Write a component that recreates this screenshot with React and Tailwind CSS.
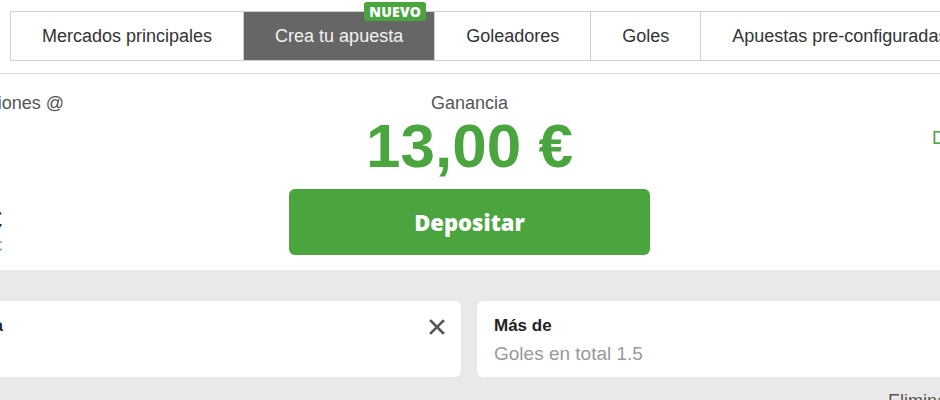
import React from 'react';

const tabs = [
  { label: 'Mercados principales' },
  { label: 'Crea tu apuesta', active: true, badge: 'NUEVO' },
  { label: 'Goleadores' },
  { label: 'Goles' },
  { label: 'Apuestas pre-configuradas' },
];

export default function App() {
  return (
    <div
      className="w-[940px] h-[400px] overflow-hidden bg-white text-[#333] font-['Liberation_Sans',Arial,sans-serif]"
    >
      {/* Tabs */}
      <div className="pt-[11px] pb-[12px] border-b border-[#dddddd]">
        <div className="ml-[10px] flex h-[50px] w-max border-t border-b border-l border-[#cfcfcf]">
          {tabs.map((t) => (
            <div
              key={t.label}
              className={`relative flex items-center px-[31px] text-[18px] border-r border-[#cfcfcf] whitespace-nowrap ${
                t.active ? 'bg-[#666666] text-[#f2f2f2]' : 'bg-white text-[#333]'
              }`}
            >
              {t.label}
              {t.badge && (
                <span className="absolute -top-[10px] right-[8px] h-[19px] px-[5px] flex items-center rounded-[3px] bg-[#4aa53e] text-white text-[14px] font-extrabold font-['Open_Sans',sans-serif] tracking-[0.2px]">
                  {t.badge}
                </span>
              )}
            </div>
          ))}
        </div>
      </div>

      {/* Summary */}
      <div className="flex pt-[16px] pb-[15px]">
        <div className="w-[224px] -ml-[160px] shrink-0 flex flex-col items-end">
          <div className="text-[18px] leading-[27px] text-[#555] whitespace-nowrap">Combinaciones @</div>
          <div className="mt-[86px] mr-[62px] text-[28px] leading-[34px] font-bold text-[#222] whitespace-nowrap">
            10,00 €
          </div>
          <div className="mr-[62px] text-[14px] leading-[18px] text-[#4aa53e] whitespace-nowrap">+1,00 €</div>
        </div>

        <div className="ml-[225px] w-[361px] shrink-0 flex flex-col items-center">
          <div className="text-[18px] leading-[27px] text-[#555]">Ganancia</div>
          <div className="-mt-[2px] text-[62px] leading-[62px] font-bold text-[#4aa53e] whitespace-nowrap">
            13,00 €
          </div>
          <button className="mt-[12px] w-full h-[66px] rounded-[6px] bg-[#4aa53e] text-white text-[22px] font-extrabold font-['Open_Sans',sans-serif]">
            Depositar
          </button>
        </div>

        <div className="pl-[282px] pt-[35px]">
          <div className="text-[18px] leading-[27px] text-[#4aa53e] whitespace-nowrap">Detalles</div>
        </div>
      </div>

      {/* Selections */}
      <div className="bg-[#e9e9e9] pt-[31px] h-[130px]">
        <div className="flex gap-4 -ml-[300px]">
          <div className="w-[761px] h-[76px] shrink-0 rounded-[6px] bg-white flex justify-between pl-[17px] pr-[16px] pt-[13px]">
            <div className="flex flex-col items-end w-[286px]">
              <div className="text-[17px] leading-[24px] font-bold text-[#222] whitespace-nowrap">Resultado final: Victoria</div>
            </div>
            <svg width="16" height="16" viewBox="0 0 16 16" className="mt-[5px]">
              <path d="M2 2 L14 14 M14 2 L2 14" stroke="#555" strokeWidth="2.6" strokeLinecap="square" />
            </svg>
          </div>
          <div className="w-[761px] h-[76px] shrink-0 rounded-[6px] bg-white pl-[17px] pt-[13px]">
            <div className="text-[17px] leading-[24px] font-bold text-[#222]">Más de</div>
            <div className="mt-[2px] text-[19px] leading-[28px] text-[#999]">Goles en total 1.5</div>
          </div>
        </div>
        <div className="ml-[888px] mt-[11px] text-[18px] leading-[27px] text-[#555] whitespace-nowrap">Eliminar todo</div>
      </div>
    </div>
  );
}
